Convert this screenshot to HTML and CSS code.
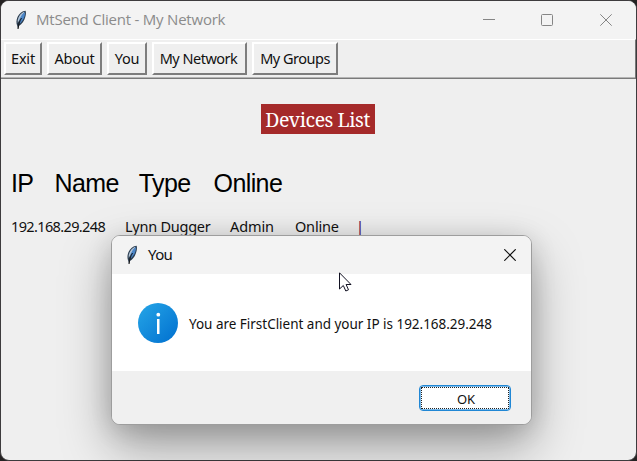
FILE: index.html
```html
<!DOCTYPE html>
<html lang="en">
<head>
<meta charset="utf-8">
<title>MtSend Client - My Network</title>
<link rel="stylesheet" href="styles.css">
</head>
<body>
<svg class="defs" width="0" height="0">
  <defs>
    <linearGradient id="blue" x1="0" y1="0" x2="1" y2="1"><stop offset="0" stop-color="#26a6e7"/><stop offset="1" stop-color="#006fcf"/></linearGradient>
    <symbol id="feather" viewBox="0 0 12 20">
      <path d="M10.600 .7C7 1 4 3.500 2.500 7C1.300 10 1 13 2.300 16L3 19L4 16C7 14 9.300 11 10.300 7C11 4.500 11.200 2.500 10.600 .7Z" fill="#2b3d50"/>
      <path d="M9.300 1.500C6 3 3.600 6 2.700 10L2.700 13L5 9L8.500 4Z" fill="#b4c5d6"/>
      <path d="M10 1.900C10.200 6 8.500 10.500 4.300 14L4.600 9L7 4.500Z" fill="#4b86c8"/>
      <path d="M6.500 8C4.800 11 3.500 14 3 19" fill="none" stroke="#111" stroke-width="1"/>
    </symbol>
  </defs>
</svg>
<div class="window">
  <header class="titlebar">
    <svg class="feather"><use href="#feather"/></svg>
    <span class="caption">MtSend Client - My Network</span>
    <div class="controls">
      <svg width="12" height="12"><path d="M0 5.500H12"/></svg>
      <svg width="12" height="12"><rect x=".5" y=".5" width="11" height="11" rx="1"/></svg>
      <svg width="12" height="12"><path d="M.3.3L11.700 11.700M11.700.3L.3 11.700"/></svg>
    </div>
  </header>
  <nav class="toolbar">
    <button class="tool exit">Exit</button>
    <button class="tool about">About</button>
    <button class="tool you">You</button>
    <button class="tool network">My Network</button>
    <button class="tool groups">My Groups</button>
  </nav>
  <main class="content">
    <h1 class="heading"><span>Devices List</span></h1>
    <div class="columns"><span>IP</span><span>Name</span><span class="kind">Type</span><span>Online</span></div>
    <div class="device"><span class="ip">192.168.29.248</span><span class="name">Lynn Dugger</span><span class="type">Admin</span><span class="status">Online</span><span class="bar">|</span></div>
  </main>
</div>
<section class="dialog">
  <header class="dialog-title">
    <svg class="feather"><use href="#feather"/></svg>
    <span>You</span>
    <svg class="close" width="12" height="12"><path d="M.3.3L11.700 11.700M11.700.3L.3 11.700"/></svg>
  </header>
  <div class="message">
    <svg width="40" height="40"><circle cx="20" cy="20" r="20" fill="url(#blue)"/><circle cx="20.300" cy="11.700" r="1.900" fill="#fff"/><rect x="19" y="16" width="2.500" height="15" fill="#fff"/></svg>
    <span>You are FirstClient and your IP is 192.168.29.248</span>
  </div>
  <footer class="actions"><button class="ok"><span>OK</span></button></footer>
</section>
<svg class="pointer" width="14" height="21"><path d="M.5 .8V17L4.300 13.500L6.800 19L9.500 17.800L7.100 12.500H12Z"/></svg>
</body>
</html>
```
FILE: styles.css
```css
* { box-sizing: border-box; }
body {
  margin: 0;
  width: 637px;
  height: 461px;
  overflow: hidden;
  background: #242222;
  color: #111;
  font-family: "Noto Sans", "Open Sans", sans-serif;
}
button { font: inherit; color: inherit; padding: 0; margin: 0; }
.defs { position: absolute; }
.window {
  height: 461px;
  border: 1px solid #3d3b3d;
  border-radius: 9px;
  background: #efefef;
  overflow: hidden;
}
.titlebar {
  height: 38px;
  display: flex;
  align-items: center;
  padding-left: 14px;
  background: #f3f3f3;
  color: #8b8b8b;
}
.feather { width: 12px; height: 20px; flex: none; }
.caption { font-family: "Open Sans", sans-serif; font-size: 15px; letter-spacing: -.22px; margin: -2px 0 0 9px; white-space: nowrap; }
.controls { display: flex; gap: 46px; margin: 0 18px 0 auto; padding-right: 6px; }
.controls svg:last-child { margin-left: 1px; }
.controls path, .controls rect { fill: none; stroke: #858585; stroke-width: 1; }
.toolbar {
  height: 40px;
  display: flex;
  gap: 5px;
  padding: 2px 3px;
  border-top: 1px solid #fff;
  border-right: 1px solid #777;
  border-bottom: 1px solid #7a7a7a;
  box-shadow: inset 0 -1px #b5b5b5;
}
.tool {
  height: 33px;
  padding-bottom: 2px;
  border: 2px solid;
  border-color: #fff #7d7d7d #7d7d7d #fff;
  background: #efefef;
  font-size: 14.500px;
  letter-spacing: -.5px;
  white-space: nowrap;
}
.exit { width: 38px; letter-spacing: -.2px; }
.about { width: 55px; letter-spacing: -.2px; }
.you { width: 40px; letter-spacing: -.2px; }
.network { width: 95px; padding-right: 2px; }
.groups { width: 86px; }
.heading {
  margin: 25px 2px 0 0;
  text-align: center;
  font: 19.500px/31px "Noto Serif", "Liberation Serif", serif;
  letter-spacing: -.45px;
}
.heading span { display: inline-block; width: 114px; height: 30px; background: #a52a2a; color: #fff; }
.columns {
  display: flex;
  margin: 33px 0 0 10px;
  gap: 21px;
  height: 30px;
  font: 25px/30px "Liberation Sans", sans-serif;
  letter-spacing: -.6px;
  color: #000;
}
.columns .kind { margin: 0 2px 0 -1px; }
.device {
  display: flex;
  margin: 18px 0 0 10px;
  font-size: 14.500px;
  line-height: 20px;
  letter-spacing: -.4px;
  white-space: nowrap;
}
.device .ip { width: 114px; letter-spacing: -.63px; }
.device .name { width: 105px; letter-spacing: -.25px; }
.device .type { width: 65px; letter-spacing: -.1px; }
.device .status { width: 61px; letter-spacing: -.2px; }
.device .bar { color: #404; }
.dialog {
  position: absolute;
  left: 111px;
  top: 235px;
  width: 421px;
  height: 190px;
  border: 1px solid #9d9d9d;
  border-radius: 9px;
  background: #fff;
  overflow: hidden;
  box-shadow: 0 22px 50px rgba(0,0,0,.34), 0 4px 26px rgba(0,0,0,.14);
}
.dialog-title {
  height: 38px;
  display: flex;
  align-items: center;
  padding: 0 15px 0 14px;
  background: #f3f3f3;
  font-size: 15px;
  letter-spacing: -.6px;
}
.dialog-title span { margin: -2px 0 0 10px; }
.close { margin-left: auto; fill: none; stroke: #111; stroke-width: 1.200; }
.message {
  height: 97px;
  display: flex;
  align-items: center;
  padding-left: 26px;
  gap: 11px;
  font-size: 13.500px;
  letter-spacing: -.02px;
  white-space: nowrap;
}
.message span { margin-top: 2px; }
.actions {
  height: 54px;
  display: flex;
  justify-content: flex-end;
  padding: 14px 20px;
  background: #f0f0f0;
}
.ok {
  width: 92px;
  height: 26px;
  padding: 1px;
  border: 1px solid #2087d5;
  border-radius: 4px;
  background: #fff;
  box-shadow: inset 0 0 0 1px #79b8e8;
  font-size: 13px;
}
.ok span { display: block; height: 22px; line-height: 22px; padding-left: 2px; border: 1px dotted #222; }
.pointer { position: absolute; left: 339px; top: 272px; fill: #fff; stroke: #111122; }
```
